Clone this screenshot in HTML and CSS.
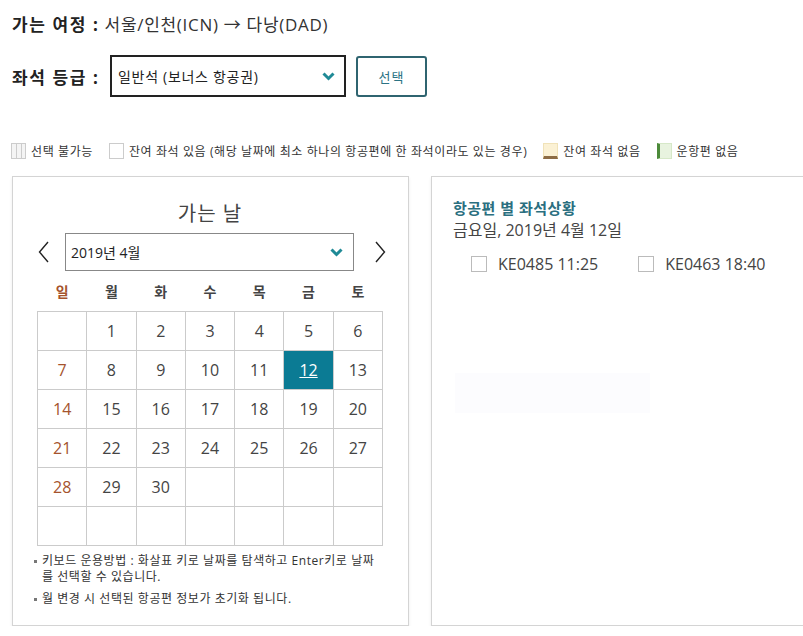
FILE: index.html
```html
<!DOCTYPE html>
<html lang="ko">
<head>
  <meta charset="UTF-8" />
  <title>좌석 조회</title>
  <link rel="stylesheet" href="styles.css">
</head>
<body>
  <div class="route">
    <strong>가는 여정 :</strong> 서울/인천(ICN) → 다낭(DAD)
  </div>

  <div class="class-row">
    <strong class="class-label">좌석 등급 :</strong>
    <div class="select-box">
      <span>일반석 (보너스 항공권)</span>
      <svg class="chev" width="13" height="9" viewBox="0 0 13 9"><path d="M1.5 1.5 L6.5 6.5 L11.5 1.5" fill="none" stroke="#1f8a96" stroke-width="3"/></svg>
    </div>
    <button class="btn-select">선택</button>
  </div>

  <ul class="legend">
    <li><span class="lg lg-disabled"></span>선택 불가능</li>
    <li><span class="lg lg-open"></span>잔여 좌석 있음 (해당 날짜에 최소 하나의 항공편에 한 좌석이라도 있는 경우)</li>
    <li><span class="lg lg-full"></span>잔여 좌석 없음</li>
    <li><span class="lg lg-none"></span>운항편 없음</li>
  </ul>

  <div class="panels">
    <div class="card cal-card">
      <h3 class="cal-title">가는 날</h3>
      <div class="month-row">
        <svg class="arrow" width="11" height="22" viewBox="0 0 11 22"><path d="M10 1 L1.5 11 L10 21" fill="none" stroke="#222" stroke-width="1.4"/></svg>
        <div class="month-select">
          <span>2019년 4월</span>
          <svg class="chev" width="13" height="9" viewBox="0 0 13 9"><path d="M1.5 1.5 L6.5 6.5 L11.5 1.5" fill="none" stroke="#1f8a96" stroke-width="3"/></svg>
        </div>
        <svg class="arrow" width="11" height="22" viewBox="0 0 11 22"><path d="M1 1 L9.5 11 L1 21" fill="none" stroke="#222" stroke-width="1.4"/></svg>
      </div>
      <table class="cal">
        <thead>
          <tr><th class="sun">일</th><th>월</th><th>화</th><th>수</th><th>목</th><th>금</th><th>토</th></tr>
        </thead>
        <tbody>
          <tr><td></td><td>1</td><td>2</td><td>3</td><td>4</td><td>5</td><td>6</td></tr>
          <tr><td class="sun">7</td><td>8</td><td>9</td><td>10</td><td>11</td><td class="on"><u>12</u></td><td>13</td></tr>
          <tr><td class="sun">14</td><td>15</td><td>16</td><td>17</td><td>18</td><td>19</td><td>20</td></tr>
          <tr><td class="sun">21</td><td>22</td><td>23</td><td>24</td><td>25</td><td>26</td><td>27</td></tr>
          <tr><td class="sun">28</td><td>29</td><td>30</td><td></td><td></td><td></td><td></td></tr>
          <tr><td></td><td></td><td></td><td></td><td></td><td></td><td></td></tr>
        </tbody>
      </table>
      <ul class="notes">
        <li>키보드 운용방법 : 화살표 키로 날짜를 탐색하고 Enter키로 날짜를 선택할 수 있습니다.</li>
        <li>월 변경 시 선택된 항공편 정보가 초기화 됩니다.</li>
      </ul>
    </div>

    <div class="card flight-card">
      <h4 class="flight-title">항공편 별 좌석상황</h4>
      <p class="flight-date">금요일, 2019년 4월 12일</p>
      <div class="flights">
        <label><span class="chk"></span>KE0485 11:25</label>
        <label><span class="chk"></span>KE0463 18:40</label>
      </div>
      <div class="ghost"></div>
    </div>
  </div>
</body>
</html>
```

FILE: styles.css
```css
body {
  margin: 0;
  padding: 0 0 0 12px;
  font-family: 'Open Sans', 'Noto Sans CJK KR', sans-serif;
  color: #333;
  background: #fff;
  overflow: hidden;
}

.route {
  font-size: 17px;
  line-height: 24px;
  padding-top: 13px;
  letter-spacing: 0.7px;
}

.route strong {
  color: #222;
  letter-spacing: 1.6px;
}

.class-row {
  display: flex;
  align-items: center;
  margin-top: 18px;
}

.class-label {
  font-size: 17px;
  color: #222;
  width: 98px;
  letter-spacing: 1.6px;
}

.select-box {
  box-sizing: border-box;
  width: 236px;
  height: 42px;
  border: 2px solid #222;
  display: flex;
  align-items: center;
  justify-content: space-between;
  padding: 0 9px 0 6px;
  font-size: 14px;
  letter-spacing: 0.7px;
  color: #222;
}

.btn-select {
  margin-left: 10px;
  box-sizing: border-box;
  width: 71px;
  height: 41px;
  border: 2px solid #2f6470;
  border-radius: 3px;
  background: #fff;
  color: #2b7384;
  font-family: inherit;
  font-size: 13px;
  letter-spacing: 1px;
}

.legend {
  list-style: none;
  margin: 45px 0 0 -1px;
  padding: 0;
  display: flex;
  font-size: 12px;
  color: #333;
  letter-spacing: 0.6px;
}

.legend li {
  display: flex;
  align-items: center;
  margin-right: 16px;
}

.lg {
  box-sizing: border-box;
  width: 15px;
  height: 16px;
  margin-right: 5px;
  border: 1px solid #ccc;
}

.lg-disabled {
  background: repeating-linear-gradient(90deg, #f4f4f4 0 4px, #ccc 4px 5px);
}

.lg-full {
  background: #fbf1d4;
  border-color: #f0e2b8;
  border-bottom: 3px solid #8d6c45;
}

.lg-none {
  background: #e8f3df;
  border-color: #d6e8c8;
  border-left: 3px solid #4c8a3a;
}

.panels {
  display: flex;
  gap: 22px;
  margin-top: 16px;
}

.card {
  box-sizing: border-box;
  height: 450px;
  border: 1px solid #d4d4d4;
  background: #fff;
  box-shadow: 0 2px 3px rgba(0, 0, 0, 0.08);
}

.cal-card {
  width: 397px;
  flex-shrink: 0;
  padding: 0 22px 0 24px;
}

.cal-title {
  margin: 23px 0 0;
  font-size: 20px;
  font-weight: normal;
  text-align: center;
  color: #444;
  line-height: 28px;
  letter-spacing: 1px;
  padding-right: 3px;
}

.month-row {
  display: flex;
  align-items: center;
  margin-top: 5px;
}

.arrow {
  display: block;
  flex-shrink: 0;
}

.arrow:first-child {
  margin: 0 16px 0 1px;
}

.arrow:last-child {
  margin-left: 21px;
}

.month-select {
  box-sizing: border-box;
  flex-shrink: 0;
  width: 289px;
  height: 38px;
  border: 1px solid #888;
  display: flex;
  align-items: center;
  justify-content: space-between;
  padding: 0 10px 0 5px;
  font-size: 14px;
  color: #222;
}

.cal {
  width: 346px;
  border-collapse: collapse;
  table-layout: fixed;
}

.cal th {
  height: 40px;
  padding: 0;
  font-size: 14px;
  font-weight: 600;
  color: #444;
  vertical-align: middle;
}

.cal td {
  height: 38px;
  padding: 0;
  border: 1px solid #cbcbcb;
  text-align: center;
  font-size: 16px;
  color: #444;
}

.cal .sun {
  color: #a5532d;
}

.cal td.on {
  background: #0b7b94;
  color: #fff;
}

.notes {
  margin: 7px 0 0 -3px;
  padding: 0 3px 0 8px;
  font-size: 12px;
  line-height: 16px;
  color: #333;
  letter-spacing: 0.55px;
}

.notes li {
  list-style: none;
  position: relative;
  margin-bottom: 6px;
  padding-right: 4px;
}

.notes li::before {
  content: "";
  position: absolute;
  left: -8px;
  top: 7px;
  width: 3px;
  height: 3px;
  background: #777;
}

.flight-card {
  flex: 1;
  margin-right: -30px;
  padding: 20px 0 0 21px;
}

.flight-title {
  margin: 0;
  font-size: 15px;
  font-weight: 600;
  color: #2b6f80;
  line-height: 22px;
  letter-spacing: 0.5px;
}

.flight-date {
  margin: 0;
  font-size: 16px;
  color: #444;
  line-height: 22px;
}

.flights {
  display: flex;
  gap: 40px;
  margin: 12px 0 0 18px;
  font-size: 16px;
  color: #444;
}

.flights label {
  display: flex;
  align-items: center;
}

.chk {
  box-sizing: border-box;
  width: 16px;
  height: 16px;
  border: 1px solid #bbb;
  margin-right: 11px;
}

.ghost {
  width: 195px;
  height: 40px;
  margin: 98px 0 0 2px;
  background: #fcfcfe;
}
```
